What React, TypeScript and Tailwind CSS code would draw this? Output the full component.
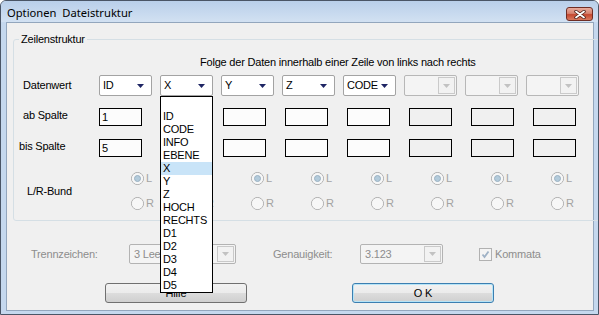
import React from 'react';

const ITEMS = ['', 'ID', 'CODE', 'INFO', 'EBENE', 'X', 'Y', 'Z', 'HOCH', 'RECHTS', 'D1', 'D2', 'D3', 'D4', 'D5'];

function Arrow({ color }: { color: string }) {
  return (
    <svg width="7" height="4" viewBox="0 0 7 4">
      <path d="M0 0H7L3.5 4Z" fill={color} />
    </svg>
  );
}

function Combo({ value }: { value: string }) {
  return (
    <div className="w-[53px] h-[21px] bg-white border border-[#a3a3a3] rounded-[2px] flex items-center">
      <span className="flex-1 pl-[3px] text-[11px] leading-none">{value}</span>
      <span className="mr-[7px] flex">
        <Arrow color="#1e2564" />
      </span>
    </div>
  );
}

function DisabledCombo() {
  return (
    <div className="w-[53px] h-[21px] bg-[#f4f4f4] border border-[#b7b7b7] rounded-[2px] flex justify-end p-[1px]">
      <div className="w-[17px] border border-[#cacaca] bg-[#f2f2f2] flex items-center justify-center">
        <Arrow color="#c2c2c2" />
      </div>
    </div>
  );
}

function TextBox({ value, disabled }: { value?: string; disabled?: boolean }) {
  return (
    <div
      className={`w-[43px] h-[18px] border border-black flex items-center pl-[2px] text-[11px] ${
        disabled ? 'bg-[#f0f0f0]' : 'bg-[#fcfcfc]'
      }`}
    >
      {value}
    </div>
  );
}

function Radio({ label, checked }: { label: string; checked?: boolean }) {
  return (
    <div className="w-[60px] flex items-center gap-[2px]">
      <span className="w-[13px] h-[13px] rounded-full border border-[#ababab] bg-[#ececec] flex items-center justify-center">
        <span className="w-[11px] h-[11px] rounded-full bg-[#f7f7f7] flex items-center justify-center">
          {checked && <span className="w-[7px] h-[7px] rounded-full bg-[#b3cbdb] border border-[#9ab1c2]" />}
        </span>
      </span>
      <span className="text-[11px] text-[#a3a3a3] leading-none">{label}</span>
    </div>
  );
}

function BottomCombo({ value, width }: { value: string; width: string }) {
  return (
    <div className={`${width} h-[20px] bg-[#f4f4f4] border border-[#b3b3b3] rounded-[2px] flex items-stretch p-[1px]`}>
      <span className="flex-1 pl-[3px] text-[11px] text-[#8d8d8d] flex items-center overflow-hidden whitespace-nowrap">
        {value}
      </span>
      <div className="w-[17px] border border-[#c9c9c9] bg-[#f2f2f2] flex items-center justify-center">
        <Arrow color="#c2c2c2" />
      </div>
    </div>
  );
}

export default function App() {
  const btn =
    'h-[20px] w-[142px] rounded-[3px] text-[11px] flex items-center justify-center bg-[linear-gradient(#f2f2f2,#ebebeb_50%,#dddddd_50%,#cfcfcf)]';

  return (
    <div className="w-[599px] h-[315px] flex flex-col border border-[#4a5566] rounded-t-[6px] bg-[#c5d8ee] font-['Liberation_Sans',Arial,sans-serif] tracking-[-0.2px] text-black overflow-hidden">
      {/* Title bar */}
      <div className="h-[21px] flex items-center justify-between pl-[6px] pr-[5px] bg-[linear-gradient(#b9cfea,#d2e1f2)]">
        <span className="font-['Noto_Sans',sans-serif] text-[11.2px] tracking-normal leading-none pt-[2px]">
          {'Optionen\u00a0 Dateistruktur'}
        </span>
        <div className="w-[27px] h-[14px] mt-[5px] rounded-[3px] border border-[#6f2d24] bg-[linear-gradient(#e8ab9d,#d7826f_45%,#c5472f_55%,#d97a5f)] flex items-center justify-center">
          <svg width="12" height="9" viewBox="0 0 12 9">
            <path d="M2 1.5L10 7.5M10 1.5L2 7.5" stroke="#4a1d16" strokeWidth="3.4" strokeLinecap="round" />
            <path d="M2 1.5L10 7.5M10 1.5L2 7.5" stroke="#ffffff" strokeWidth="1.8" strokeLinecap="round" />
          </svg>
        </div>
      </div>

      {/* Client area */}
      <div className="flex-1 ml-[5px] mr-[4px] mb-[3px] bg-[#f0f0f0] border border-[#93a6bd] flex flex-col">
        <fieldset className="ml-[6px] mt-[10px] w-[573px] border border-[#d5dfe5] rounded-[3px] pb-[10px]">
          <legend className="ml-[5px] px-[2px] text-[11px] leading-[13px]">Zeilenstruktur</legend>

          <div className="mt-[10px] pl-[186px] text-[11px] leading-[12px]">
            Folge der Daten innerhalb einer Zeile von links nach rechts
          </div>

          {/* Datenwert */}
          <div className="mt-[7px] flex items-center">
            <div className="w-[85px] pl-[9px] text-[11px]">Datenwert</div>
            <div className="flex gap-[8px]">
              <Combo value="ID" />
              <div className="relative">
                <Combo value="X" />
                <div className="absolute left-0 top-full z-10 w-[53px] bg-white border border-black">
                  {ITEMS.map((it, i) => (
                    <div
                      key={i}
                      className={`h-[13px] pl-[2px] text-[11px] leading-[13px] ${it === 'X' ? 'bg-[#c9e4f8]' : ''}`}
                    >
                      {it}
                    </div>
                  ))}
                </div>
              </div>
              <Combo value="Y" />
              <Combo value="Z" />
              <Combo value="CODE" />
              <DisabledCombo />
              <DisabledCombo />
              <DisabledCombo />
            </div>
          </div>

          {/* ab Spalte */}
          <div className="mt-[12px] flex items-center">
            <div className="w-[85px] pl-[9px] text-[11px] -mt-[3px]">ab Spalte</div>
            <div className="flex gap-[19px]">
              <TextBox value="1" />
              <TextBox />
              <TextBox />
              <TextBox />
              <TextBox />
              <TextBox disabled />
              <TextBox disabled />
              <TextBox disabled />
            </div>
          </div>

          {/* bis Spalte */}
          <div className="mt-[13px] flex items-center">
            <div className="w-[85px] pl-[5px] text-[11px] -mt-[3px]">bis Spalte</div>
            <div className="flex gap-[19px]">
              <TextBox value="5" />
              <TextBox />
              <TextBox />
              <TextBox />
              <TextBox />
              <TextBox disabled />
              <TextBox disabled />
              <TextBox disabled />
            </div>
          </div>

          {/* L/R-Bund */}
          <div className="mt-[15px] flex items-center">
            <div className="w-[85px] pl-[13px] text-[11px]">L/R-Bund</div>
            <div className="pl-[32px] flex flex-col gap-[12px]">
              <div className="flex">
                {Array.from({ length: 8 }).map((_, i) => (
                  <Radio key={i} label="L" checked />
                ))}
              </div>
              <div className="flex">
                {Array.from({ length: 8 }).map((_, i) => (
                  <Radio key={i} label="R" />
                ))}
              </div>
            </div>
          </div>
        </fieldset>

        {/* Trennzeichen / Genauigkeit */}
        <div className="mt-[23px] pl-[24px] flex items-center text-[11px]">
          <span className="w-[98px] text-[#8d8d8d]">Trennzeichen:</span>
          <BottomCombo value="3 Leerzeichen" width="w-[107px]" />
          <span className="ml-[37px] w-[87px] text-[#8d8d8d]">Genauigkeit:</span>
          <BottomCombo value="3.123" width="w-[83px]" />
          <span className="ml-[36px] w-[13px] h-[13px] border border-[#b1b1b1] bg-[#f4f4f4] flex items-center justify-center">
            <svg width="9" height="9" viewBox="0 0 9 9">
              <path d="M1.5 4.5L3.5 7L7.5 1.5" stroke="#9fb2c6" strokeWidth="1.8" fill="none" />
            </svg>
          </span>
          <span className="ml-[3px] text-[#8d8d8d]">Kommata</span>
        </div>

        {/* Buttons */}
        <div className="mt-[19px] pl-[98px] flex gap-[105px]">
          <div className={`${btn} border border-[#707070]`}>Hilfe</div>
          <div className={`${btn} border border-[#3c7fb1] shadow-[inset_0_0_0_1px_#b6e4f7]`}>O K</div>
        </div>
      </div>
    </div>
  );
}
